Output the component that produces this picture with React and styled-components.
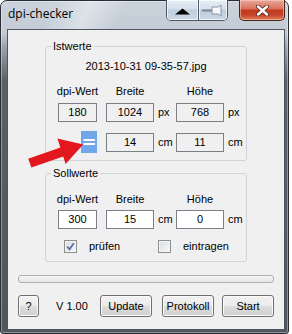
import styled, { createGlobalStyle } from 'styled-components';

const GlobalStyle = createGlobalStyle`
  html, body { margin: 0; padding: 0; background: #ffffff; }
  body { font-family: 'Liberation Sans', Arial, sans-serif; color: #000; }
`;

const Window = styled.div`
  position: relative;
  box-sizing: border-box;
  width: 289px;
  height: 334px;
  display: flex;
  flex-direction: column;
  padding: 0 3px 3px 6px;
  border: 1px solid #2a2f36;
  border-radius: 7px 7px 3px 3px;
  background:
    linear-gradient(115deg, rgba(255,255,255,0) 18%, rgba(255,255,255,0.4) 30%, rgba(255,255,255,0) 42%) top / 100% 30px no-repeat,
    linear-gradient(180deg, #cbd3dc 0px, #c2cbd5 32px, #9aa2ab 46px, #5a6068 80px, #50565d 100%);
  box-shadow: inset 0 0 0 1px rgba(255,255,255,0.35);
`;

const TitleBar = styled.div`
  display: flex;
  align-items: flex-start;
  height: 28px;
`;

const Title = styled.div`
  margin: 5px 0 0 1px;
  font-family: 'Open Sans', 'Liberation Sans', sans-serif;
  font-size: 12px;
  line-height: 16px;
  color: #000;
`;

const CaptionGroup = styled.div`
  display: flex;
  margin: -1px 0 0 auto;
  height: 21px;
  box-sizing: border-box;
  border: 1px solid #4b5667;
  border-top: none;
  border-radius: 0 0 5px 5px;
  overflow: hidden;
`;

const CaptionButton = styled.div`
  width: ${p => p.$w}px;
  display: flex;
  align-items: center;
  justify-content: center;
  background: linear-gradient(180deg, #e6edf5 0%, #d6e0eb 45%, #bfcddd 50%, #cbd8e7 100%);
  box-shadow: inset 0 0 0 1px rgba(255,255,255,0.7);
  & + & { border-left: 1px solid #4b5667; }
`;

const CloseButton = styled.div`
  box-sizing: border-box;
  width: 46px;
  height: 21px;
  margin: -1px 0 0 11px;
  border: 1px solid #4a2218;
  border-top: none;
  border-radius: 0 0 5px 5px;
  background: linear-gradient(180deg, #e9a899 0%, #d8705a 45%, #c4391d 50%, #c5432a 75%, #e0805a 100%);
  box-shadow: inset 0 0 0 1px rgba(255,220,210,0.5);
  display: flex;
  align-items: center;
  justify-content: center;
`;

const Client = styled.div`
  flex: 1;
  display: flex;
  flex-direction: column;
  border: 1px solid #4c5563;
  background: #f0f0f0;
  font-size: 11px;
  line-height: 13px;
`;

const Group = styled.fieldset`
  box-sizing: border-box;
  width: 202px;
  min-width: 0;
  margin: ${p => p.$top}px 0 0 37px;
  padding: ${p => p.$padTop}px 0 ${p => p.$padBottom}px 0;
  border: 1px solid #d0d3d6;
  border-radius: 3px;
`;

const Legend = styled.legend`
  margin-left: 5px;
  padding: 0 2px;
  font-size: 11px;
  line-height: 13px;
`;

const FileName = styled.div`
  text-align: center;
`;

const FieldGrid = styled.div`
  display: grid;
  grid-template-columns: 39px 9px 48px 22px 48px 22px;
  grid-template-areas: "dpi gap br bu ho hu";
  align-items: center;
  margin: ${p => p.$top}px 0 0 12px;
`;

const ColLabel = styled.div`
  grid-area: ${p => p.$area};
  display: flex;
  justify-content: center;
  white-space: nowrap;
`;

const ValueBox = styled.div`
  grid-area: ${p => p.$area};
  box-sizing: border-box;
  height: 19px;
  border: 1px solid #7b7f87;
  background: ${p => (p.$edit ? '#ffffff' : '#f0f0f0')};
  line-height: 17px;
  text-align: center;
`;

const Unit = styled.div`
  grid-area: ${p => p.$area};
  padding-left: 4px;
`;

const EqualButton = styled.div`
  grid-area: dpi;
  justify-self: end;
  width: 16px;
  height: 22px;
  background: #6fa7ea;
  color: #ffffff;
  font-family: 'DejaVu Sans', sans-serif;
  font-weight: bold;
  font-size: 18px;
  line-height: 22px;
  text-align: center;
`;

const CheckRow = styled.div`
  display: grid;
  grid-template-columns: 94px 1fr;
  margin: 11px 0 0 18px;
`;

const CheckItem = styled.label`
  display: flex;
  align-items: center;
  gap: 12px;
`;

const CheckBox = styled.span`
  box-sizing: border-box;
  width: 13px;
  height: 13px;
  display: flex;
  align-items: center;
  justify-content: center;
  border: 1px solid #8e8f8f;
  background: linear-gradient(135deg, #d9dde2 0%, #f7f8f9 100%);
  box-shadow: inset 0 0 0 1px #f4f4f4;
`;

const Progress = styled.div`
  box-sizing: border-box;
  width: 256px;
  height: 8px;
  margin: 13px 0 0 10px;
  border: 1px solid #b0b0b0;
  border-radius: 3px;
  background: linear-gradient(180deg, #f6f6f6 0%, #e4e4e4 100%);
`;

const ButtonRow = styled.div`
  display: flex;
  align-items: center;
  height: 22px;
  margin: 12px 0 0 10px;
`;

const Button = styled.div`
  box-sizing: border-box;
  width: ${p => p.$w}px;
  height: 22px;
  margin-left: ${p => p.$ml || 0}px;
  border: 1px solid #707070;
  border-radius: 3px;
  background: linear-gradient(180deg, #f2f2f2 0%, #ebebeb 48%, #dddddd 52%, #cfcfcf 100%);
  box-shadow: inset 0 0 0 1px #fbfbfb;
  font-size: 11px;
  line-height: 20px;
  text-align: center;
`;

const Version = styled.div`
  width: 44px;
  margin-left: 17px;
`;

const ArrowOverlay = styled.svg`
  position: absolute;
  left: -1px;
  top: -1px;
  pointer-events: none;
`;

const Check = () => (
  <svg width="9" height="9" viewBox="0 0 9 9">
    <path d="M1.2 4.6 L3.6 7.3 L7.8 1.2" fill="none" stroke="#5a6ea8" strokeWidth="1.8" />
  </svg>
);

export default function App() {
  return (
    <>
      <GlobalStyle />
      <Window>
        <TitleBar>
          <Title>dpi-checker</Title>
          <CaptionGroup>
            <CaptionButton $w={31}>
              <svg width="15" height="7" viewBox="0 0 15 7" style={{ marginTop: 2 }}>
                <polygon points="0,6.5 7.5,0.5 15,6.5" fill="#000" />
              </svg>
            </CaptionButton>
            <CaptionButton $w={28}>
              <svg width="22" height="13" viewBox="0 0 22 13">
                <line x1="0" y1="6.5" x2="10" y2="6.5" stroke="#7b8594" strokeWidth="2" />
                <path d="M10 3 H16 L19 1 V12 L16 10 H10 Z" fill="#f4f6f8" stroke="#8a94a3" />
              </svg>
            </CaptionButton>
          </CaptionGroup>
          <CloseButton>
            <svg width="13" height="11" viewBox="0 0 13 11">
              <path d="M2 1.5 L11 9.5 M11 1.5 L2 9.5" stroke="#5a2a20" strokeWidth="4.2" strokeLinecap="round" />
              <path d="M2 1.5 L11 9.5 M11 1.5 L2 9.5" stroke="#ffffff" strokeWidth="2.4" strokeLinecap="round" />
            </svg>
          </CloseButton>
        </TitleBar>

        <Client>
          <Group $top={10} $padTop={7} $padBottom={7}>
            <Legend>Istwerte</Legend>
            <FileName>2013-10-31 09-35-57.jpg</FileName>
            <FieldGrid $top={12}>
              <ColLabel $area="dpi">dpi-Wert</ColLabel>
              <ColLabel $area="br">Breite</ColLabel>
              <ColLabel $area="ho">Höhe</ColLabel>
            </FieldGrid>
            <FieldGrid $top={5}>
              <ValueBox $area="dpi">180</ValueBox>
              <ValueBox $area="br">1024</ValueBox>
              <Unit $area="bu">px</Unit>
              <ValueBox $area="ho">768</ValueBox>
              <Unit $area="hu">px</Unit>
            </FieldGrid>
            <FieldGrid $top={9}>
              <EqualButton>=</EqualButton>
              <ValueBox $area="br">14</ValueBox>
              <Unit $area="bu">cm</Unit>
              <ValueBox $area="ho">11</ValueBox>
              <Unit $area="hu">cm</Unit>
            </FieldGrid>
          </Group>

          <Group $top={6} $padTop={13} $padBottom={8}>
            <Legend>Sollwerte</Legend>
            <FieldGrid $top={0}>
              <ColLabel $area="dpi">dpi-Wert</ColLabel>
              <ColLabel $area="br">Breite</ColLabel>
              <ColLabel $area="ho">Höhe</ColLabel>
            </FieldGrid>
            <FieldGrid $top={4}>
              <ValueBox $area="dpi" $edit>300</ValueBox>
              <ValueBox $area="br" $edit>15</ValueBox>
              <Unit $area="bu">cm</Unit>
              <ValueBox $area="ho" $edit>0</ValueBox>
              <Unit $area="hu">cm</Unit>
            </FieldGrid>
            <CheckRow>
              <CheckItem>
                <CheckBox><Check /></CheckBox>
                prüfen
              </CheckItem>
              <CheckItem>
                <CheckBox />
                eintragen
              </CheckItem>
            </CheckRow>
          </Group>

          <Progress />

          <ButtonRow>
            <Button $w={21}>?</Button>
            <Version>V 1.00</Version>
            <Button $w={52}>Update</Button>
            <Button $w={52} $ml={10}>Protokoll</Button>
            <Button $w={52} $ml={8}>Start</Button>
          </ButtonRow>
        </Client>

        <ArrowOverlay width="292" height="334" viewBox="0 0 292 334">
          <polygon
            points="28.2,158.8 60.4,147.6 57.4,138.6 83.2,144.6 65.6,163.9 63.2,156.4 31.4,167.6"
            fill="#e3171e"
          />
        </ArrowOverlay>
      </Window>
    </>
  );
}
